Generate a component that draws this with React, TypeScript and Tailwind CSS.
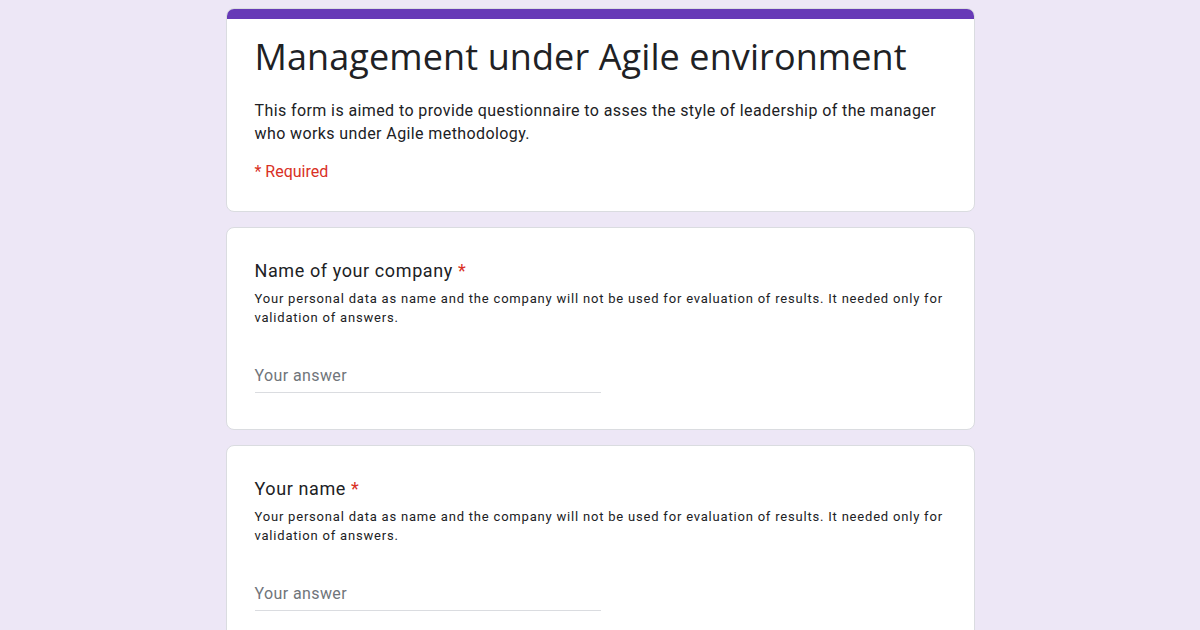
export default function App() {
  const questions = ['Name of your company', 'Your name']
  return (
    <div className="min-h-screen bg-[#ede7f6] flex justify-center pt-2" style={{ fontFamily: 'Roboto, "Liberation Sans", sans-serif' }}>
      <div className="w-[749px] flex flex-col gap-[15px]">
        <div className="bg-white rounded-lg border border-[#dadce0] overflow-hidden">
          <div className="h-[10px] bg-[#673ab7]" />
          <div className="px-[28px] pt-[14px] pb-[27px]">
            <h1 className="text-[36px] leading-[48px] tracking-[0.1px] text-[#202124]" style={{ fontFamily: '"Open Sans", Roboto, sans-serif' }}>
              Management under Agile environment
            </h1>
            <p className="mt-[18px] text-[16px] leading-[23px] tracking-[0.4px] text-[#202124]">
              This form is aimed to provide questionnaire to asses the style of leadership of the manager who works under Agile methodology.
            </p>
            <p className="mt-[15px] text-[16px] leading-[24px] text-[#d93025]">* Required</p>
          </div>
        </div>
        {questions.map(q => (
          <div key={q} className="bg-white rounded-lg border border-[#dadce0] px-[28px] pt-[31px] pb-[36px]">
            <div className="text-[18px] leading-[24px] tracking-[0.6px] text-[#202124]">
              {q} <span className="text-[#d93025]">*</span>
            </div>
            <p className="mt-[6px] text-[13px] leading-[19px] tracking-[0.8px] text-[#202124]">
              Your personal data as name and the company will not be used for evaluation of results. It needed only for validation of answers.
            </p>
            <div className="mt-[37px] w-[346px] border-b border-[#dadce0] pb-[4px] text-[16px] leading-[24px] tracking-[0.4px] text-[#70757a]">
              Your answer
            </div>
          </div>
        ))}
      </div>
    </div>
  )
}
